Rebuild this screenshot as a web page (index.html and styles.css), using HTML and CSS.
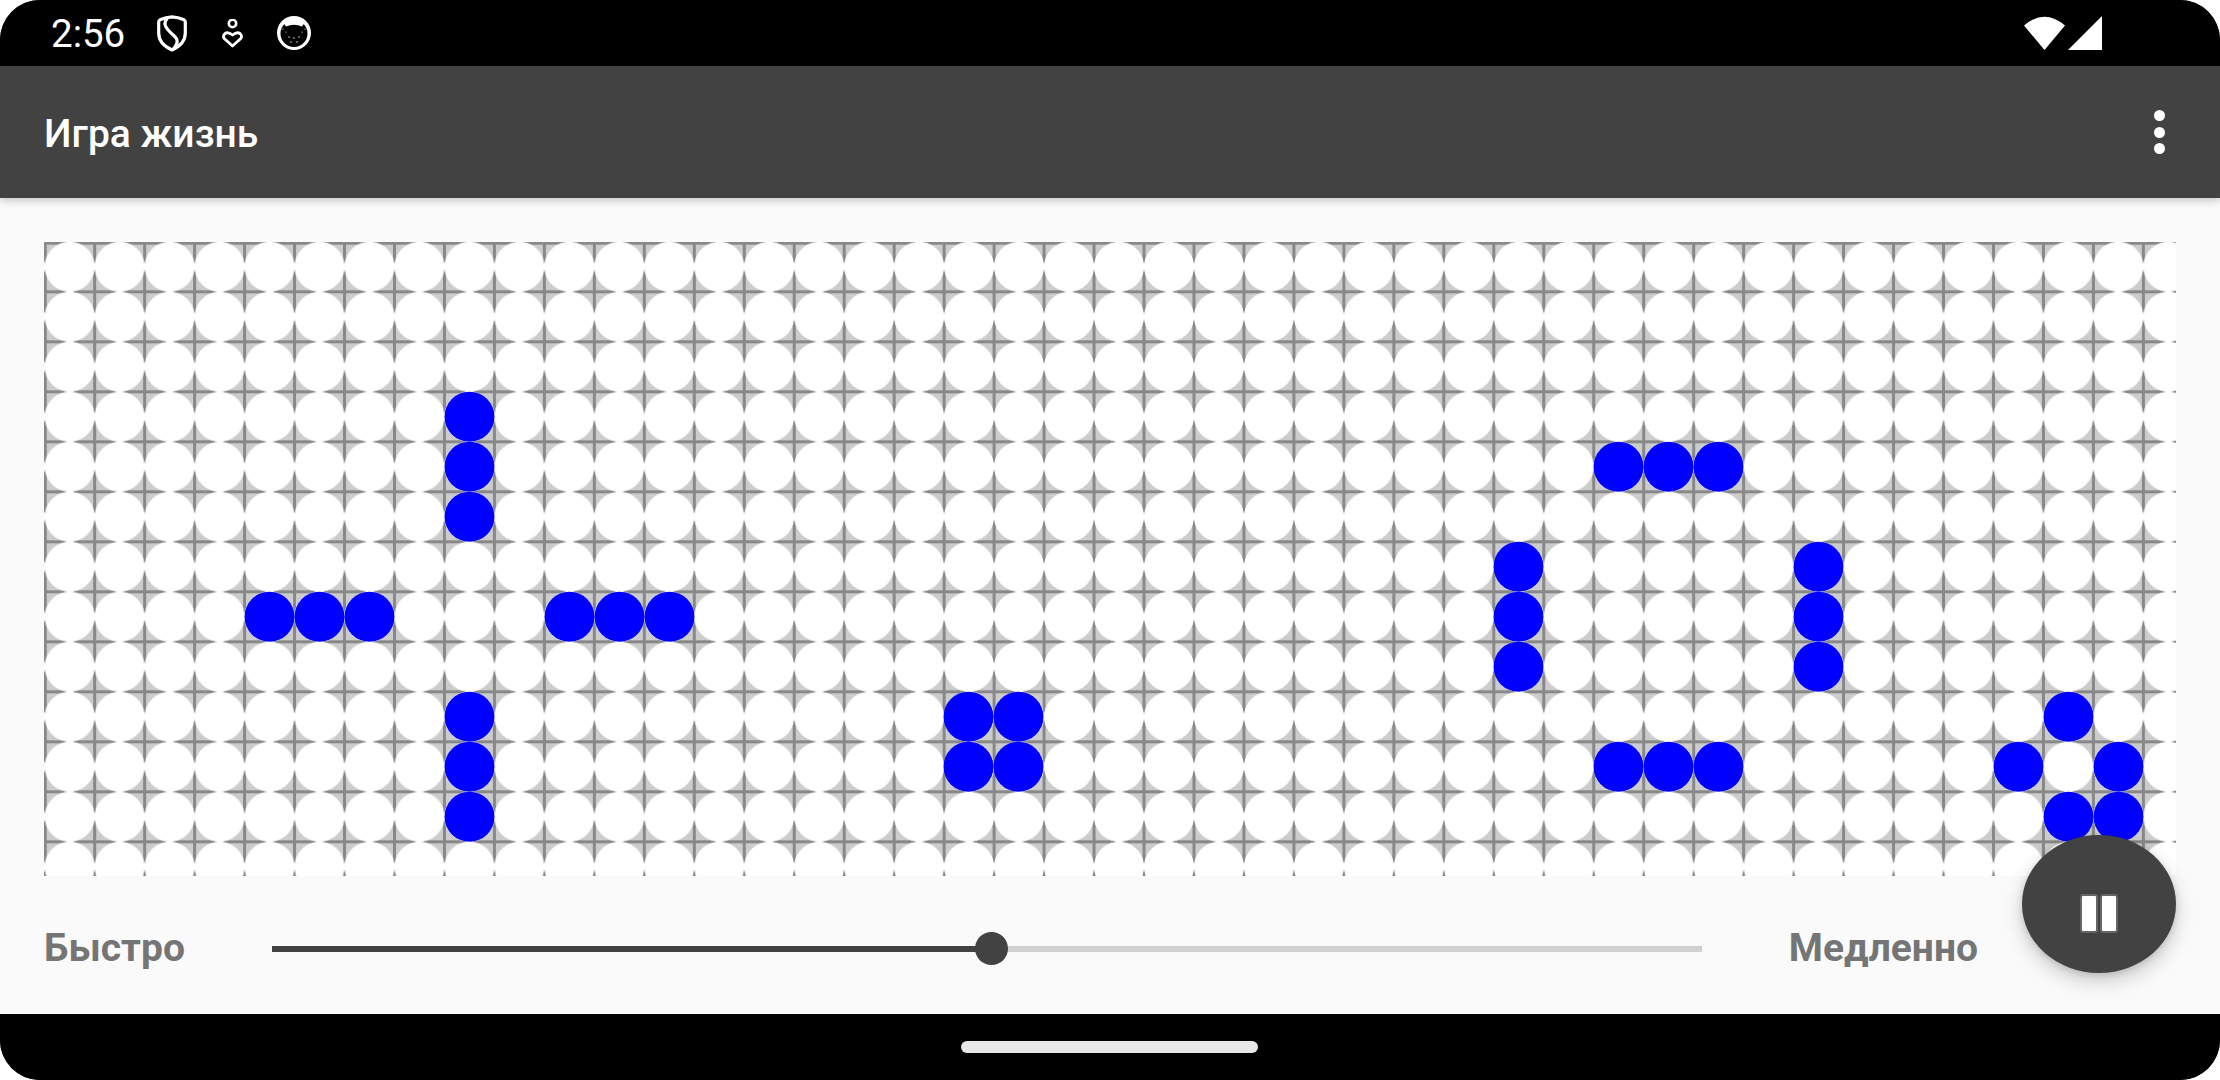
FILE: index.html
```html
<!DOCTYPE html>
<html lang="ru">
<head>
<meta charset="utf-8">
<title>Игра жизнь</title>
<link rel="stylesheet" href="styles.css">
</head>
<body>
<div class="screen">
  <header class="status">
    <div class="status-left">
      <span class="time">2:56</span>
      <svg class="ic-shield" viewBox="0 0 30 37"><path d="M15 1.800 Q21 2 27 4.800 Q28.300 5.500 28.300 7 V18 Q28.300 29 15 35 Q1.700 29 1.700 18 V7 Q1.700 5.500 3 4.800 Q9 2 15 1.800 Z" fill="none" stroke="#fff" stroke-width="3.200" stroke-linejoin="round"/><path d="M10.500 3 C6 8 7.500 12 14.500 18.500 C20 23 23 26 16.500 34" fill="none" stroke="#fff" stroke-width="3.200"/></svg>
      <svg class="ic-heart" viewBox="0 0 21 29"><circle cx="10.500" cy="4.500" r="3.700" fill="none" stroke="#fff" stroke-width="2.600"/><path d="M10.500 27 L2.200 19.500 Q0.500 17 3 14.500 Q6 12.500 10.500 16 Q15 12.500 18 14.500 Q20.500 17 18.800 19.500 Z" fill="none" stroke="#fff" stroke-width="2.800" stroke-linejoin="round"/></svg>
      <svg class="ic-cat" viewBox="0 0 34 34"><circle cx="17" cy="17" r="17" fill="#fff"/><circle cx="17" cy="17.500" r="13.500" fill="#000"/><path d="M5 5 L9 10.500 Q17 7 25 10.500 L29 5 Q17 -3 5 5 Z" fill="#fff"/><g fill="#fff"><circle cx="6" cy="13" r=".6"/><circle cx="28" cy="13" r=".6"/><circle cx="9" cy="16" r=".6"/><circle cx="25" cy="16" r=".6"/><circle cx="12" cy="21" r=".7"/><circle cx="17" cy="22" r=".7"/><circle cx="22" cy="21" r=".7"/><circle cx="14" cy="26" r=".7"/><circle cx="20" cy="26" r=".7"/></g></svg>
    </div>
    <div class="status-right">
      <svg class="ic-wifi" viewBox="0 0 41 34"><path d="M20.500 34 L0 9.500 Q20.500 -8 41 9.500 Z" fill="#fff"/></svg>
      <svg class="ic-signal" viewBox="0 0 34 34"><path d="M34 0 V34 H0 Z" fill="#fff"/></svg>
    </div>
  </header>
  <div class="toolbar">
    <h1 class="title">Игра жизнь</h1>
    <div class="menu"><i></i><i></i><i></i></div>
  </div>
  <main class="content">
    <div class="board">
      <i class="cell" style="grid-area:4/9"></i>
      <i class="cell" style="grid-area:5/9"></i>
      <i class="cell" style="grid-area:6/9"></i>
      <i class="cell" style="grid-area:8/5"></i>
      <i class="cell" style="grid-area:8/6"></i>
      <i class="cell" style="grid-area:8/7"></i>
      <i class="cell" style="grid-area:8/11"></i>
      <i class="cell" style="grid-area:8/12"></i>
      <i class="cell" style="grid-area:8/13"></i>
      <i class="cell" style="grid-area:10/9"></i>
      <i class="cell" style="grid-area:11/9"></i>
      <i class="cell" style="grid-area:12/9"></i>
      <i class="cell" style="grid-area:10/19"></i>
      <i class="cell" style="grid-area:10/20"></i>
      <i class="cell" style="grid-area:11/19"></i>
      <i class="cell" style="grid-area:11/20"></i>
      <i class="cell" style="grid-area:5/32"></i>
      <i class="cell" style="grid-area:5/33"></i>
      <i class="cell" style="grid-area:5/34"></i>
      <i class="cell" style="grid-area:11/32"></i>
      <i class="cell" style="grid-area:11/33"></i>
      <i class="cell" style="grid-area:11/34"></i>
      <i class="cell" style="grid-area:7/30"></i>
      <i class="cell" style="grid-area:8/30"></i>
      <i class="cell" style="grid-area:9/30"></i>
      <i class="cell" style="grid-area:7/36"></i>
      <i class="cell" style="grid-area:8/36"></i>
      <i class="cell" style="grid-area:9/36"></i>
      <i class="cell" style="grid-area:10/41"></i>
      <i class="cell" style="grid-area:11/40"></i>
      <i class="cell" style="grid-area:11/42"></i>
      <i class="cell" style="grid-area:12/41"></i>
      <i class="cell" style="grid-area:12/42"></i>
    </div>
    <div class="controls">
      <span class="label">Быстро</span>
      <div class="slider"><div class="slider-fill"></div><div class="slider-thumb"></div></div>
      <span class="label">Медленно</span>
    </div>
    <button class="fab" aria-label="Пауза"><i></i><i></i></button>
  </main>
  <footer class="nav"><div class="pill"></div></footer>
</div>
</body>
</html>
```
FILE: styles.css
```css
* { box-sizing: border-box; }
html, body { margin: 0; padding: 0; background: #fff; }
body { width: 2220px; height: 1080px; overflow: hidden; font-family: Roboto, "Noto Sans", sans-serif; }

.screen {
  width: 2220px; height: 1080px;
  display: flex; flex-direction: column;
  border-radius: 40px; overflow: hidden;
  background: #000;
}

.status {
  height: 66px; flex: none;
  display: flex; justify-content: space-between; align-items: center;
  padding: 0 118px 0 51px;
  background: #000; color: #fff;
}
.status-left { display: flex; align-items: center; }
.time { font-size: 38.5px; line-height: 1; width: 106px; padding-top: 2px; }
.ic-shield { width: 30px; height: 37px; margin-right: 35px; }
.ic-heart { width: 21px; height: 29px; margin-right: 34px; }
.ic-cat { width: 34px; height: 34px; }
.status-right { display: flex; align-items: center; gap: 3px; }
.ic-wifi { width: 41px; height: 34px; }
.ic-signal { width: 34px; height: 34px; }

.toolbar {
  height: 132px; flex: none;
  display: flex; justify-content: space-between; align-items: center;
  padding: 0 55px 0 44px;
  background: #424242;
  box-shadow: 0 3px 8px rgba(0,0,0,.2);
  position: relative; z-index: 2;
}
.title { margin: 0; padding-top: 4px; font-size: 39px; font-weight: 500; color: #fff; line-height: 1; }
.menu { display: flex; flex-direction: column; gap: 5.5px; }
.menu i { display: block; width: 11px; height: 11px; border-radius: 50%; background: #fff; }

.content {
  flex: 1; position: relative;
  background: #fafafa;
  padding: 44px 44px 0;
  display: flex; flex-direction: column;
}
.board {
  height: 634px; flex: none;
  overflow: hidden;
  display: grid;
  grid-template-columns: repeat(43, 49.98px);
  grid-auto-rows: 50px;
  background-color: #ccc;
  background-image:
    radial-gradient(circle at 24.99px 25px, #fff 24.6px, rgba(255,255,255,0) 25.3px),
    linear-gradient(#888, #888),
    linear-gradient(#888, #888),
    linear-gradient(90deg, #888 3px, transparent 3px),
    linear-gradient(#888 3px, transparent 3px);
  background-size: 49.98px 50px, 100% 2.7px, 2.7px 100%, 49.98px 50px, 49.98px 50px;
  background-position: .7px -.3px, 0 0, 0 0, -.8px 0, 0 -1.7px;
  background-repeat: repeat, no-repeat, no-repeat, repeat, repeat;
}
.cell { display: block; border-radius: 50%; background: #00f; transform: translate(.5px, -.3px); }

.controls {
  flex: 1;
  display: flex; align-items: center;
  padding: 7px 198px 0 0;
}
.label { font-size: 39px; font-weight: 700; color: #757575; line-height: 1; }
.slider {
  flex: 1; height: 6px; margin: 0 87px 0 87px;
  position: relative; background: #d0d0d0;
}
.slider-fill { position: absolute; left: 0; top: 0; bottom: 0; width: 50.3%; background: #424242; }
.slider-thumb {
  position: absolute; left: 50.3%; top: 50%;
  width: 33px; height: 33px; margin: -16.5px 0 0 -16.5px;
  border-radius: 50%; background: #424242;
}

.fab {
  position: absolute; right: 44px; top: 637px;
  width: 154px; height: 138px;
  border: 0; border-radius: 50%; padding: 18px 0 0;
  background: #424242;
  box-shadow: 0 8px 20px rgba(0,0,0,.2), 0 2px 6px rgba(0,0,0,.12);
  display: flex; justify-content: center; align-items: center; gap: 2px;
}
.fab i {
  display: block; width: 18px; height: 39px;
  background: #fff; border: 2.5px solid #666; border-radius: 3px;
}

.nav {
  height: 66px; flex: none;
  background: #000;
  display: flex; justify-content: center; align-items: center;
}
.pill { width: 297px; height: 12px; border-radius: 6px; background: #e8e8e8; margin-left: -1px; }
```
